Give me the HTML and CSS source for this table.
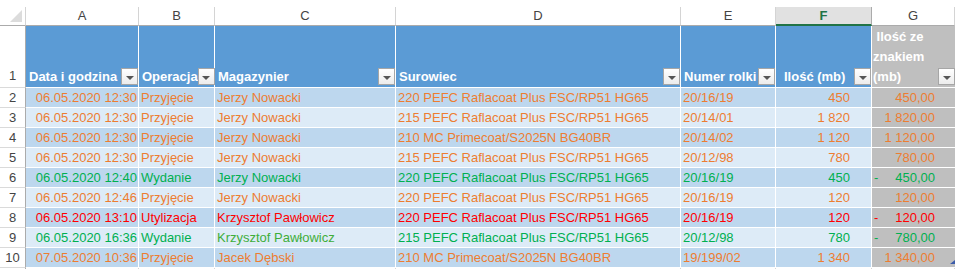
FILE: index.html
```html
<!DOCTYPE html>
<html lang="pl">
<head>
<meta charset="utf-8">
<title>Arkusz</title>
<link rel="stylesheet" href="styles.css">
</head>
<body>
<div class="sheet">
  <div class="colrow">
    <div class="corner"><span class="corner-tri"></span></div>
    <div class="ch">A</div>
    <div class="ch">B</div>
    <div class="ch">C</div>
    <div class="ch">D</div>
    <div class="ch">E</div>
    <div class="ch sel">F</div>
    <div class="ch">G</div>
  </div>

  <div class="hrow">
    <div class="rh">1</div>
    <div class="th"><span class="lbl">Data i godzina</span><span class="fbtn"></span></div>
    <div class="th"><span class="lbl">Operacja</span><span class="fbtn"></span></div>
    <div class="th"><span class="lbl">Magazynier</span><span class="fbtn"></span></div>
    <div class="th"><span class="lbl">Surowiec</span><span class="fbtn"></span></div>
    <div class="th"><span class="lbl">Numer rolki</span><span class="fbtn"></span></div>
    <div class="th th-ind"><span class="lbl">Ilość (mb)</span><span class="fbtn"></span></div>
    <div class="th th-gray"><span class="lbl">&nbsp;Ilość ze<br>znakiem<br>(mb)</span><span class="fbtn"></span></div>
  </div>

  <div class="row dark orange">
    <div class="rh">2</div>
    <div class="c right">06.05.2020 12:30</div>
    <div class="c">Przyjęcie</div>
    <div class="c">Jerzy Nowacki</div>
    <div class="c">220 PEFC Raflacoat Plus FSC/RP51 HG65</div>
    <div class="c">20/16/19</div>
    <div class="c num">450</div>
    <div class="c acc"><span class="sign"></span><span>450,00</span></div>
  </div>
  <div class="row light orange">
    <div class="rh">3</div>
    <div class="c right">06.05.2020 12:30</div>
    <div class="c">Przyjęcie</div>
    <div class="c">Jerzy Nowacki</div>
    <div class="c">215 PEFC Raflacoat Plus FSC/RP51 HG65</div>
    <div class="c">20/14/01</div>
    <div class="c num">1&nbsp;820</div>
    <div class="c acc"><span class="sign"></span><span>1&nbsp;820,00</span></div>
  </div>
  <div class="row dark orange">
    <div class="rh">4</div>
    <div class="c right">06.05.2020 12:30</div>
    <div class="c">Przyjęcie</div>
    <div class="c">Jerzy Nowacki</div>
    <div class="c">210 MC Primecoat/S2025N BG40BR</div>
    <div class="c">20/14/02</div>
    <div class="c num">1&nbsp;120</div>
    <div class="c acc"><span class="sign"></span><span>1&nbsp;120,00</span></div>
  </div>
  <div class="row light orange">
    <div class="rh">5</div>
    <div class="c right">06.05.2020 12:30</div>
    <div class="c">Przyjęcie</div>
    <div class="c">Jerzy Nowacki</div>
    <div class="c">215 PEFC Raflacoat Plus FSC/RP51 HG65</div>
    <div class="c">20/12/98</div>
    <div class="c num">780</div>
    <div class="c acc"><span class="sign"></span><span>780,00</span></div>
  </div>
  <div class="row dark green">
    <div class="rh">6</div>
    <div class="c right">06.05.2020 12:40</div>
    <div class="c">Wydanie</div>
    <div class="c">Jerzy Nowacki</div>
    <div class="c">220 PEFC Raflacoat Plus FSC/RP51 HG65</div>
    <div class="c">20/16/19</div>
    <div class="c num">450</div>
    <div class="c acc"><span class="sign">-</span><span>450,00</span></div>
  </div>
  <div class="row light orange">
    <div class="rh">7</div>
    <div class="c right">06.05.2020 12:46</div>
    <div class="c">Przyjęcie</div>
    <div class="c">Jerzy Nowacki</div>
    <div class="c">220 PEFC Raflacoat Plus FSC/RP51 HG65</div>
    <div class="c">20/16/19</div>
    <div class="c num">120</div>
    <div class="c acc"><span class="sign"></span><span>120,00</span></div>
  </div>
  <div class="row dark red">
    <div class="rh">8</div>
    <div class="c right">06.05.2020 13:10</div>
    <div class="c">Utylizacja</div>
    <div class="c">Krzysztof Pawłowicz</div>
    <div class="c">220 PEFC Raflacoat Plus FSC/RP51 HG65</div>
    <div class="c">20/16/19</div>
    <div class="c num">120</div>
    <div class="c acc"><span class="sign">-</span><span>120,00</span></div>
  </div>
  <div class="row light green">
    <div class="rh">9</div>
    <div class="c right">06.05.2020 16:36</div>
    <div class="c">Wydanie</div>
    <div class="c lime">Krzysztof Pawłowicz</div>
    <div class="c">215 PEFC Raflacoat Plus FSC/RP51 HG65</div>
    <div class="c">20/12/98</div>
    <div class="c num">780</div>
    <div class="c acc"><span class="sign">-</span><span>780,00</span></div>
  </div>
  <div class="row dark orange">
    <div class="rh">10</div>
    <div class="c right">07.05.2020 10:36</div>
    <div class="c">Przyjęcie</div>
    <div class="c">Jacek Dębski</div>
    <div class="c">210 MC Primecoat/S2025N BG40BR</div>
    <div class="c">19/199/02</div>
    <div class="c num">1&nbsp;340</div>
    <div class="c acc"><span class="sign"></span><span>1&nbsp;340,00</span><span class="handle"></span></div>
  </div>
  <div class="row empty">
    <div class="rh"></div>
    <div class="e"></div>
    <div class="e"></div>
    <div class="e"></div>
    <div class="e"></div>
    <div class="e"></div>
    <div class="e"></div>
    <div class="e"></div>
  </div>
</div>
</body>
</html>
```

FILE: styles.css
```css
html, body {
  margin: 0;
  padding: 0;
  background: #ffffff;
  overflow: hidden;
}

body {
  width: 955px;
  height: 269px;
  font-family: "Liberation Sans", Arial, sans-serif;
  font-size: 13px;
}

.sheet {
  display: grid;
  grid-template-columns: 26px 113px 76px 181px 285px 95px 96px 83px;
  grid-template-rows: 26px 62px repeat(9, 20px) 2px;
}

.colrow, .hrow, .row {
  display: contents;
}

/* column letters */
.corner {
  margin-top: 7px;
  border-right: 1px solid #d4d4d4;
  border-bottom: 1px solid #ababab;
  display: flex;
  justify-content: flex-end;
  align-items: flex-end;
  padding: 0 3px 3px 0;
  box-sizing: border-box;
}

.corner-tri {
  width: 12px;
  height: 12px;
  background: #dcdcdc;
  clip-path: polygon(100% 0, 100% 100%, 0 100%);
}

.ch {
  margin-top: 7px;
  border-right: 1px solid #d4d4d4;
  border-bottom: 1px solid #ababab;
  color: #444444;
  text-align: center;
  line-height: 18px;
  box-sizing: border-box;
}

.ch.sel {
  background: #e1e1e1;
  color: #217346;
  font-weight: bold;
  border-bottom: 2px solid #217346;
  border-right-color: #ababab;
  line-height: 17px;
}

/* row headers */
.rh {
  border-right: 1px solid #ababab;
  border-bottom: 1px solid #dadada;
  color: #444444;
  text-align: center;
  line-height: 19px;
  box-sizing: border-box;
  display: flex;
  align-items: flex-end;
  justify-content: center;
}

.hrow .rh {
  line-height: 20px;
  padding-bottom: 1px;
}

/* table header */
.th {
  background: #5b9bd5;
  color: #ffffff;
  font-weight: bold;
  border-right: 1px solid #ffffff;
  border-bottom: 1px solid #ffffff;
  display: flex;
  justify-content: space-between;
  align-items: flex-end;
  padding-left: 3px;
  box-sizing: border-box;
  line-height: 20px;
  min-width: 0;
}

.th-ind {
  padding-left: 8px;
}

.th-gray {
  background: #bfbfbf;
  padding-left: 1px;
  border-right: 0;
}

.lbl {
  white-space: nowrap;
}

.fbtn {
  flex: none;
  width: 17px;
  height: 17px;
  margin-bottom: 2px;
  box-sizing: border-box;
  border: 1px solid #a6a6a6;
  background: linear-gradient(#ffffff, #ececec);
  display: flex;
  align-items: center;
  justify-content: center;
}

.fbtn::after {
  content: "";
  width: 0;
  height: 0;
  margin-top: 2px;
  border-left: 4px solid transparent;
  border-right: 4px solid transparent;
  border-top: 4px solid #555555;
}

/* data cells */
.c {
  border-right: 1px solid #ffffff;
  border-bottom: 1px solid #ffffff;
  box-sizing: border-box;
  line-height: 19px;
  padding: 0 2px;
  white-space: nowrap;
  overflow: hidden;
}

.row.dark .c { background: #bdd7ee; }
.row.light .c { background: #ddebf7; }

.row .c.acc {
  background: #bfbfbf;
  border-right: 0;
  display: flex;
  justify-content: space-between;
  padding: 0 20px 0 2px;
  position: relative;
  overflow: visible;
}

.right {
  text-align: right;
  padding-right: 1px;
}

.num {
  text-align: right;
  padding-right: 21px;
}

.orange { color: #ed7d31; }
.green { color: #00b050; }
.red { color: #ff0000; }
.lime { color: #3fae3a; }

.handle {
  position: absolute;
  right: 0;
  bottom: 3px;
  width: 5px;
  height: 4px;
  background: #3b5ba9;
  clip-path: polygon(100% 0, 100% 100%, 0 100%);
}

/* empty partial row */
.e {
  border-right: 1px solid #d4d4d4;
  box-sizing: border-box;
}

.row.empty .rh {
  border-bottom: 0;
}
```
